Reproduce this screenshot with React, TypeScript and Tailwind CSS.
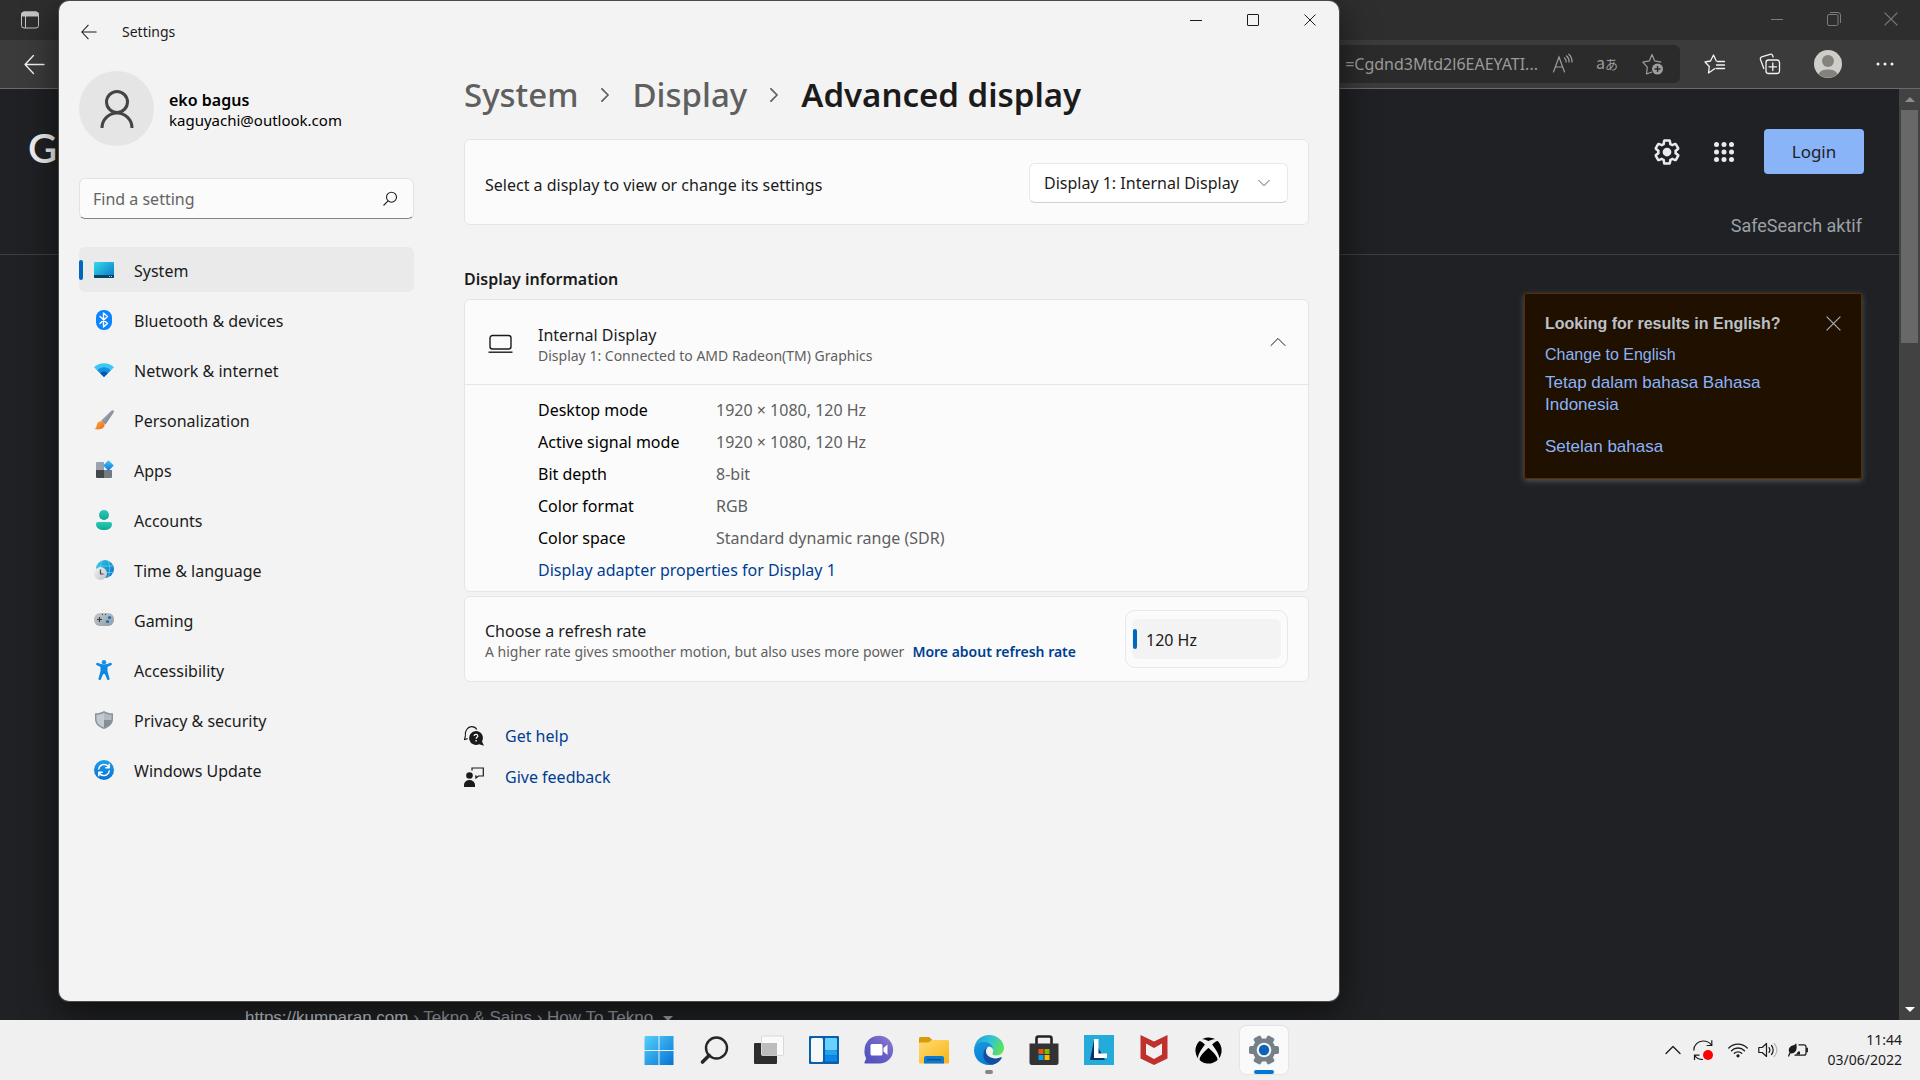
import React from "react";
import { FaXbox } from "react-icons/fa";

type IconProps = { className?: string };

/* ---------- Settings navigation icons ---------- */

const SystemIcon = () => (
  <svg viewBox="0 0 20 20" className="size-5">
    <defs>
      <linearGradient id="sys" x1="0" y1="0" x2="1" y2="1">
        <stop offset="0" stopColor="#34dbe8" />
        <stop offset="1" stopColor="#0a74c8" />
      </linearGradient>
    </defs>
    <rect x="0" y="2" width="20" height="16" rx="1" fill="url(#sys)" />
    <path d="M0 15h20v2a1 1 0 0 1-1 1H1a1 1 0 0 1-1-1z" fill="#0b4263" />
    <path d="M15 16h1v1h-1zM17 16h1v1h-1z" fill="#9fd4f2" />
  </svg>
);

const BluetoothIcon = () => (
  <svg viewBox="0 0 20 20" className="size-5">
    <rect x="2" y="0" width="16" height="20" rx="7.5" fill="#0a84ff" />
    <path d="M6 6.500l7.500 7-4 3.500V3l4 3.500-7.500 7" fill="none" stroke="#fff" strokeWidth="1.400" strokeLinejoin="round" strokeLinecap="round" />
  </svg>
);

const NetworkIcon = () => (
  <svg viewBox="0 0 20 20" className="size-5">
    <path d="M10 17L0 7.2C5.500 1.900 14.500 1.900 20 7.200z" fill="#3cc8f4" />
    <path d="M10 17L3.200 10.300C7 6.200 13 6.200 16.800 10.300z" fill="#1590df" />
    <path d="M10 17L6.200 13.200C8.300 10.900 11.700 10.900 13.800 13.200z" fill="#0d57a8" />
  </svg>
);

const BrushIcon = () => (
  <svg viewBox="0 0 20 20" className="size-5">
    <defs>
      <linearGradient id="br" x1="0" y1="0" x2="1" y2="1">
        <stop offset="0" stopColor="#b4bec8" />
        <stop offset="1" stopColor="#66727e" />
      </linearGradient>
      <linearGradient id="bt" x1="0" y1="0" x2="1" y2="1">
        <stop offset="0" stopColor="#fbb13c" />
        <stop offset="1" stopColor="#f4651d" />
      </linearGradient>
    </defs>
    <path d="M19.500.5c.7.7.6 1.500 0 2.300L11.500 14.500 7 10.800 17 .9c.8-.8 1.900-1 2.500-.4z" fill="url(#br)" />
    <path d="M6.500 11.200c2.200-.3 4.300 1.500 4.100 3.800C10.400 18.500 6 20.300.3 19c2.200-.8 2.100-2.200 2.500-4.200.4-2 1.800-3.400 3.700-3.600z" fill="url(#bt)" />
  </svg>
);

const AppsIcon = () => (
  <svg viewBox="0 0 20 20" className="size-5">
    <defs>
      <linearGradient id="apd" x1="0" y1="0" x2="1" y2="1">
        <stop offset="0" stopColor="#46c9f7" />
        <stop offset="1" stopColor="#0c72d4" />
      </linearGradient>
    </defs>
    <path d="M2 3a1 1 0 0 1 1-1h7v8H2z" fill="#99a2ae" />
    <path d="M2 10h8v8H3a1 1 0 0 1-1-1z" fill="#43474c" />
    <path d="M10 10h8v7a1 1 0 0 1-1 1h-7z" fill="#727a83" />
    <rect x="10.700" y="1.700" width="7.600" height="7.600" rx=".8" transform="rotate(45 14.500 5.500)" fill="url(#apd)" />
  </svg>
);

const AccountsIcon = () => (
  <svg viewBox="0 0 20 20" className="size-5">
    <defs>
      <linearGradient id="acc" x1="0" y1="0" x2="0" y2="1">
        <stop offset="0" stopColor="#27cdb6" />
        <stop offset="1" stopColor="#14a594" />
      </linearGradient>
    </defs>
    <circle cx="10" cy="5" r="5" fill="url(#acc)" />
    <path d="M4 12h12a2 2 0 0 1 2 2c0 4-3.500 6-8 6s-8-2-8-6a2 2 0 0 1 2-2z" fill="url(#acc)" />
  </svg>
);

const TimeIcon = () => (
  <svg viewBox="0 0 20 20" className="size-5">
    <defs>
      <linearGradient id="gl" x1="0" y1="0" x2="1" y2="1">
        <stop offset="0" stopColor="#2fcbe0" />
        <stop offset="1" stopColor="#0f68c4" />
      </linearGradient>
      <linearGradient id="ck" x1="0" y1="0" x2="1" y2="1">
        <stop offset="0" stopColor="#f4f4f5" />
        <stop offset="1" stopColor="#bcc0c4" />
      </linearGradient>
    </defs>
    <circle cx="11" cy="9" r="9" fill="url(#gl)" />
    <path d="M2.500 6h17M6 12.500h13.500M8 .8c-2 4-2 12 0 16.400M14 .8c2.300 4 2.300 12 0 16.400" stroke="#5fe0ee" strokeWidth=".7" fill="none" />
    <circle cx="6.500" cy="13.500" r="6.500" fill="url(#ck)" />
    <path d="M6.500 9.500V14H9.500" stroke="#44484d" strokeWidth="1.200" fill="none" />
  </svg>
);

const GamingIcon = () => (
  <svg viewBox="0 0 20 20" className="size-5">
    <defs>
      <linearGradient id="gm" x1="0" y1="0" x2="1" y2="1">
        <stop offset="0" stopColor="#c3c9ce" />
        <stop offset="1" stopColor="#929ba3" />
      </linearGradient>
    </defs>
    <rect x="0" y="3" width="20" height="13" rx="6" fill="url(#gm)" />
    <path d="M5.500 7v5M3 9.500h5" stroke="#3a3e43" strokeWidth="1.200" />
    <path d="M8 4.500h1M11 4.500h1" stroke="#3a3e43" strokeWidth="1" />
    <circle cx="15.500" cy="7.500" r="1.600" fill="#0f6fc6" />
    <circle cx="13.500" cy="11.500" r="1.600" fill="#0f6fc6" />
  </svg>
);

const AccessibilityIcon = () => (
  <svg viewBox="0 0 20 20" className="size-5">
    <circle cx="10" cy="2.200" r="2.200" fill="#1793e4" />
    <path d="M2.300 3.500c.4-.8 1-.9 1.800-.5 3.700 1.900 8.100 1.900 11.800 0 .8-.4 1.400-.3 1.800.5.400.8 0 1.500-.7 1.800L13.500 7v4l2 7.500c.2.800-.2 1.400-.9 1.500-.7.200-1.300-.1-1.500-.8L10.800 14H9.200l-2.300 5.200c-.2.700-.8 1-1.500.8-.7-.1-1.100-.7-.9-1.500l2-7.500V7L3 5.300c-.7-.3-1.100-1-.7-1.800z" fill="#1189e0" />
  </svg>
);

const ShieldIcon = () => (
  <svg viewBox="0 0 20 20" className="size-5">
    <path d="M10 1c2.500 1.700 5.500 2.300 9 2.300V9c0 5-3.500 8-9 10C4.500 17 1 14 1 9V3.300C4.500 3.300 7.500 2.700 10 1z" fill="#8b949c" />
    <path d="M10 2.700v14.700C5.300 15.600 2.500 13 2.500 9V4.700c3 0 5.400-.6 7.500-2z" fill="#c5cad0" />
    <path d="M10 2.700c2.100 1.400 4.500 2 7.500 2V10H10z" fill="#b4bac1" />
    <path d="M10 10h7.400c-.4 3.500-3 5.800-7.400 7.400z" fill="#858e96" />
  </svg>
);

const UpdateIcon = () => (
  <svg viewBox="0 0 20 20" className="size-5">
    <defs>
      <linearGradient id="up" x1="0" y1="0" x2="0" y2="1">
        <stop offset="0" stopColor="#1f9de9" />
        <stop offset="1" stopColor="#0873d4" />
      </linearGradient>
    </defs>
    <circle cx="10" cy="10" r="10" fill="url(#up)" />
    <path d="M4.800 9a5.400 5.400 0 0 1 9.900-2M15.200 11a5.400 5.400 0 0 1-9.900 2M15.200 4.300v3.400h-3.400M4.800 15.700v-3.400h3.400" stroke="#fff" strokeWidth="1.500" fill="none" strokeLinecap="round" strokeLinejoin="round" />
  </svg>
);

/* ---------- Line glyphs ---------- */

const BackArrow = ({ className }: IconProps) => (
  <svg viewBox="0 0 20 20" className={className} fill="none" stroke="currentColor" strokeWidth="1.300" strokeLinecap="round" strokeLinejoin="round">
    <path d="M19 10H1M9 1.500L1 10l8 8.500" />
  </svg>
);

const Chevron = ({ className }: IconProps) => (
  <svg viewBox="0 0 16 16" className={className} fill="none" stroke="currentColor" strokeLinecap="round" strokeLinejoin="round">
    <path d="M1 4.500l7 7 7-7" />
  </svg>
);

const Minimize = () => (
  <svg viewBox="0 0 12 12" className="size-3" stroke="currentColor" fill="none">
    <path d="M0 6.500h12" />
  </svg>
);

const Close = ({ className }: IconProps) => (
  <svg viewBox="0 0 12 12" className={className} stroke="currentColor" fill="none">
    <path d="M.5.5l11 11M11.500.5l-11 11" />
  </svg>
);

/* ---------- Taskbar icons ---------- */

const StartIcon = () => (
  <svg viewBox="0 0 30 30" className="size-[30px]">
    <defs>
      <linearGradient id="st" gradientUnits="userSpaceOnUse" x1="0" y1="0" x2="30" y2="30">
        <stop offset="0" stopColor="#55d4fd" />
        <stop offset="1" stopColor="#0572d3" />
      </linearGradient>
    </defs>
    <path d="M1.500 1H14.500v14H.5V2zM15.500 1h14v14h-14zM.5 16h14v14H.5zM15.500 16h14v14h-14z" fill="url(#st)" />
  </svg>
);

const SearchTaskIcon = () => (
  <svg viewBox="0 0 30 30" className="size-[30px]" fill="none" stroke="#262626" strokeLinecap="round">
    <circle cx="17.500" cy="13" r="10.500" strokeWidth="2.400" />
    <path d="M10 20.500L3.500 27" strokeWidth="3.600" />
  </svg>
);

const TaskViewIcon = () => (
  <svg viewBox="0 0 30 30" className="size-[30px]">
    <rect x="0" y="8" width="23" height="21" rx="1" fill="#2d2d2b" />
    <rect x="7.500" y="1" width="22" height="19.500" rx="1" fill="#fafafa" stroke="#d8d8d8" />
    <path d="M8 8h15v12.500H8z" fill="#bdbdbd" />
  </svg>
);

const WidgetsIcon = () => (
  <svg viewBox="0 0 30 30" className="size-[30px]">
    <rect x="0" y="1" width="30" height="28" rx="1" fill="#0b5ea8" />
    <rect x="2" y="3" width="12" height="24" rx="1.500" fill="#f5f7f9" />
    <rect x="16" y="3" width="12" height="12.500" rx="1" fill="#66d2fd" />
    <rect x="16" y="16" width="12" height="4.500" rx=".5" fill="#1ea4f5" />
    <rect x="16" y="21" width="12" height="5.500" rx=".5" fill="#0d86ea" />
  </svg>
);

const ChatIcon = () => (
  <svg viewBox="0 0 30 30" className="size-[30px]">
    <defs>
      <linearGradient id="ch" x1="0" y1="1" x2="1" y2="0">
        <stop offset="0" stopColor="#4a4fbd" />
        <stop offset=".6" stopColor="#6c63c8" />
        <stop offset="1" stopColor="#9b7fc9" />
      </linearGradient>
    </defs>
    <path d="M15 .8c8 0 14.200 6.200 14.200 14S23 28.500 15 28.500H1.200c-.8 0-1.100-.9-.6-1.500l1.600-3.400A13.500 13.500 0 0 1 .6 14.800C.6 7 7 .8 15 .8z" fill="url(#ch)" />
    <rect x="6.500" y="9" width="12" height="11.500" rx="1.500" fill="#fff" />
    <path d="M19.500 13l4-3.500v10.500l-4-3.500z" fill="#fff" />
  </svg>
);

const FolderIcon = () => (
  <svg viewBox="0 0 30 30" className="size-[30px]">
    <defs>
      <linearGradient id="fo" x1="0" y1="0" x2="1" y2="1">
        <stop offset="0" stopColor="#ffdc74" />
        <stop offset="1" stopColor="#f8b414" />
      </linearGradient>
    </defs>
    <path d="M0 3.500A1.500 1.500 0 0 1 1.500 2H10l3.500 3-3 4H0z" fill="#dc9a09" />
    <path d="M0 8.500A1.500 1.500 0 0 1 1 7.500h8.500L13 5h15.500A1.500 1.500 0 0 1 30 6.500v21a1 1 0 0 1-1 1H1a1 1 0 0 1-1-1z" fill="url(#fo)" />
    <path d="M5 28.500V23a2 2 0 0 1 2-2h16a2 2 0 0 1 2 2v5.500z" fill="#0d78cf" />
    <path d="M8 24.700h14" stroke="#0a4c8c" strokeWidth="1.200" />
  </svg>
);

const EdgeIcon = () => (
  <svg viewBox="0 0 30 30" className="size-[30px]">
    <defs>
      <linearGradient id="e1" x1="0" y1=".3" x2="1" y2=".6">
        <stop offset="0" stopColor="#259fdb" />
        <stop offset=".5" stopColor="#30c5d3" />
        <stop offset="1" stopColor="#63e453" />
      </linearGradient>
      <linearGradient id="e2" x1="0" y1="0" x2=".6" y2="1">
        <stop offset="0" stopColor="#179bde" />
        <stop offset="1" stopColor="#0878d4" />
      </linearGradient>
    </defs>
    <path d="M.2 13C1.500 5 7.500 0 15 0c8.500 0 15 6 15 13 0 4.500-3.500 7.500-8 7.500-3 0-4-1.300-3.300-2.500 1.500-2.600 0-6-3.700-7z" fill="url(#e1)" />
    <path d="M0 15C.5 10 4.500 7 9.500 7c5.500 0 9.500 3.500 9.500 7.500-.5-2-2-3-3.500-3-4 0-5.500 7-2 11.500S24 28 20 29c-1.500.7-3.500 1-5 1C6.500 30 0 23.500 0 15z" fill="url(#e2)" />
    <path d="M14 11.800c-6 2.700-7.500 16 4.500 18 4.500-1 7.500-3.500 9.300-6.800.3-.6-.2-1-.8-.7-7 3.200-15.500-.8-15-6.300.1-1.800.8-3.200 2-4.200z" fill="#104f9f" />
  </svg>
);

const StoreIcon = () => (
  <svg viewBox="0 0 30 30" className="size-[30px]">
    <path d="M7.500 9V3.500a2 2 0 0 1 2-2h11a2 2 0 0 1 2 2V9" fill="none" stroke="#222" strokeWidth="2.600" />
    <path d="M.5 8.500h29v19a2.500 2.500 0 0 1-2.500 2.500H3a2.500 2.500 0 0 1-2.500-2.500z" fill="#333" />
    <path d="M9.500 14h5v5h-5z" fill="#f1511b" />
    <path d="M15.500 14h5v5h-5z" fill="#80b900" />
    <path d="M9.500 20h5v5h-5z" fill="#00a3ee" />
    <path d="M15.500 20h5v5h-5z" fill="#fbb901" />
  </svg>
);

const LenovoIcon = () => (
  <svg viewBox="0 0 30 30" className="size-[30px]">
    <path d="M0 0h30v30H0z" fill="#25abda" />
    <path d="M10 5L6 25h15z" fill="#0b3167" />
    <path d="M10 4h4.500v14.500H23V23H10z" fill="#fff" />
  </svg>
);

const ShieldMIcon = () => (
  <svg viewBox="0 0 30 30" className="size-[30px]">
    <path d="M1.500 0L15 6.500 28.500 0v23.500L15 30 1.500 23.500z" fill="#c0302d" />
    <path d="M7 8.500l8 4.500 8-4.500v11L15 24l-8-4.500z" fill="#f1f1f1" />
  </svg>
);

const GearIcon = () => (
  <svg viewBox="-15 -15 30 30" className="size-[30px]">
    <g fill="#75808a">
      <circle r="11.500" />
      {[0, 60, 120].map((a) => (
        <rect key={a} x="-15" y="-4" width="30" height="8" rx="1.800" transform={`rotate(${a})`} />
      ))}
    </g>
    <circle r="7.300" fill="#f4f5f6" />
    <circle r="5.200" fill="#0f63b5" />
  </svg>
);

/* ---------- Data ---------- */

const nav = [
  { label: "System", icon: <SystemIcon /> },
  { label: "Bluetooth & devices", icon: <BluetoothIcon /> },
  { label: "Network & internet", icon: <NetworkIcon /> },
  { label: "Personalization", icon: <BrushIcon /> },
  { label: "Apps", icon: <AppsIcon /> },
  { label: "Accounts", icon: <AccountsIcon /> },
  { label: "Time & language", icon: <TimeIcon /> },
  { label: "Gaming", icon: <GamingIcon /> },
  { label: "Accessibility", icon: <AccessibilityIcon /> },
  { label: "Privacy & security", icon: <ShieldIcon /> },
  { label: "Windows Update", icon: <UpdateIcon /> },
];

const info = [
  ["Desktop mode", "1920 × 1080, 120 Hz"],
  ["Active signal mode", "1920 × 1080, 120 Hz"],
  ["Bit depth", "8-bit"],
  ["Color format", "RGB"],
  ["Color space", "Standard dynamic range (SDR)"],
];

const apps = [
  { label: "Start", icon: <StartIcon /> },
  { label: "Search", icon: <SearchTaskIcon /> },
  { label: "Task view", icon: <TaskViewIcon /> },
  { label: "Widgets", icon: <WidgetsIcon /> },
  { label: "Chat", icon: <ChatIcon /> },
  { label: "File Explorer", icon: <FolderIcon /> },
  { label: "Microsoft Edge", icon: <EdgeIcon />, open: true },
  { label: "Microsoft Store", icon: <StoreIcon /> },
  { label: "Lenovo Vantage", icon: <LenovoIcon /> },
  { label: "McAfee", icon: <ShieldMIcon /> },
  { label: "Xbox", icon: <FaXbox className="size-[27px] text-black" /> },
  { label: "Settings app", icon: <GearIcon />, active: true },
];

/* ---------- Browser ---------- */

function Browser() {
  return (
    <div className="flex min-h-0 flex-1 flex-col bg-[#202124]">
      <div className="flex h-10 shrink-0 items-center justify-between bg-[#2e2e2e] text-[#7c7c7c]">
        <button aria-label="Tab actions" className="ml-5 text-[#c4c4c4]">
          <svg viewBox="0 0 20 20" className="size-5" fill="none" stroke="currentColor">
            <rect x="1.500" y="2" width="17" height="16" rx="2.500" />
            <path d="M1.500 4.500a2.500 2.500 0 0 1 2.500-2.500h12a2.500 2.500 0 0 1 2.500 2.500V6h-17z" fill="currentColor" />
            <path d="M5.500 6v12" />
          </svg>
        </button>
        <div className="flex h-[38px] self-start">
          <button aria-label="Minimize browser" className="flex w-[57px] items-center justify-center"><Minimize /></button>
          <button aria-label="Restore browser" className="flex w-[57px] items-center justify-center">
            <svg viewBox="0 0 14 14" className="size-3.5" fill="none" stroke="currentColor">
              <rect x=".5" y="2.500" width="10.500" height="11" rx="1.500" />
              <path d="M3 .5h8a2.500 2.500 0 0 1 2.500 2.500v8" />
            </svg>
          </button>
          <button aria-label="Close browser" className="flex w-[58px] items-center justify-center"><Close className="size-3.5" /></button>
        </div>
      </div>

      <div className="flex h-[49px] shrink-0 items-center border-b border-[#6a6a6a] bg-[#3b3b3b] text-[#f2f2f2]">
        <button aria-label="Back" className="ml-6"><BackArrow className="size-[21px]" /></button>
        <div className="ml-6 flex h-[38px] flex-1 items-center rounded-md bg-[#2b2b2b] pr-4 text-[#9d9d9d]">
          <input
            aria-label="Address"
            readOnly
            value="=Cgdnd3Mtd2l6EAEYATI..."
            className="min-w-0 flex-1 bg-transparent text-right text-base text-[#9a9a9a] outline-none"
          />
          <button aria-label="Read aloud" className="ml-3.5">
            <svg viewBox="0 0 22 22" className="size-[22px]" fill="none" stroke="currentColor" strokeWidth="1.200" strokeLinecap="round">
              <path d="M1.500 19L7 4l5.500 15M3.600 14h6.800M12.500 5c1.200 1 1.700 2.300 1.700 4M14.500 3c1.800 1.500 2.700 3.500 2.600 6M16.800 1.200c2.200 2 3.300 4.800 3.200 7.800" />
            </svg>
          </button>
          <button aria-label="Translate" className="ml-[22px] flex items-baseline pb-1 font-['Noto_Sans_CJK_JP',sans-serif] leading-5">
            <span className="text-base">a</span><span className="text-[13px]">あ</span>
          </button>
          <button aria-label="Add to favorites" className="ml-6">
            <svg viewBox="0 0 22 22" className="size-[22px]" fill="none" stroke="currentColor" strokeWidth="1.200" strokeLinejoin="round">
              <path d="M10 19l-5.500 2 .8-6.800L.8 9.200l6.500-1.300L10 1.500l2.700 6.400 6.500 1.300" />
              <circle cx="15.500" cy="16" r="5.500" fill="currentColor" stroke="none" />
              <path d="M15.500 13v6M12.500 16h6" stroke="#2b2b2b" strokeWidth="1.400" />
            </svg>
          </button>
        </div>
        <button aria-label="Favorites" className="ml-6">
          <svg viewBox="0 0 22 22" className="size-[22px]" fill="none" stroke="currentColor" strokeWidth="1.300" strokeLinejoin="round" strokeLinecap="round">
            <path d="M11 15.500L4.500 20l.8-6.500L1 9l5.500-1L9.500 2l2.800 6M13.500 8.500h7M12.500 12h8M12.500 15.500h8" />
          </svg>
        </button>
        <button aria-label="Collections" className="ml-[33px]">
          <svg viewBox="0 0 22 22" className="size-[22px]" fill="none" stroke="currentColor" strokeWidth="1.300" strokeLinejoin="round" strokeLinecap="round">
            <rect x="7" y="7" width="13.500" height="13.500" rx="2.500" />
            <path d="M13.800 10v7.500M10 13.800h7.500M4.800 15.500L1.500 6.500c-.4-1.200.1-2.200 1.200-2.600L11 1.300c1.200-.4 2.200.1 2.600 1.200l.5 1.500" />
          </svg>
        </button>
        <button aria-label="Profile" className="ml-[33px]">
          <svg viewBox="0 0 28 28" className="size-7">
            <circle cx="14" cy="14" r="14" fill="#cfcdca" />
            <circle cx="14" cy="11" r="6" fill="#85817d" />
            <path d="M4.500 24a10 6.500 0 0 1 19 0 14 14 0 0 1-19 0z" fill="#85817d" />
          </svg>
        </button>
        <button aria-label="More" className="mr-[25px] ml-[33px]">
          <svg viewBox="0 0 20 20" className="size-5" fill="currentColor">
            <circle cx="3" cy="10" r="1.500" /><circle cx="10" cy="10" r="1.500" /><circle cx="17" cy="10" r="1.500" />
          </svg>
        </button>
      </div>

      <div className="flex min-h-0 flex-1">
        <div className="flex min-w-0 flex-1 flex-col">
          <header className="flex h-[166px] shrink-0 flex-col border-b border-[#3c4043] pr-[35px] pl-7">
            <div className="flex h-[125px] items-center justify-between">
              <span className="pb-2 font-['Lato',sans-serif] text-[40px] leading-none font-semibold text-[#f1f1f1]">Google</span>
              <div className="flex items-center">
                <button aria-label="Quick settings" className="text-[#e8eaed]">
                  <svg viewBox="0 0 24 24" className="size-[30px]" fill="currentColor">
                    <path d="M13.850 22.250h-3.700c-.74 0-1.360-.54-1.450-1.270l-.27-1.890c-.27-.14-.53-.29-.79-.46l-1.800.72c-.7.26-1.470-.03-1.810-.65L2.200 15.530c-.35-.66-.2-1.440.36-1.880l1.530-1.190c-.01-.15-.02-.3-.02-.46 0-.15.01-.31.02-.46l-1.520-1.190c-.59-.45-.74-1.260-.37-1.880l1.850-3.190c.34-.62 1.110-.9 1.790-.63l1.810.73c.26-.17.52-.32.78-.46l.27-1.910c.09-.7.71-1.250 1.440-1.250h3.700c.74 0 1.360.54 1.450 1.270l.27 1.890c.27.14.53.29.79.46l1.800-.72c.71-.26 1.480.03 1.820.65l1.840 3.180c.36.66.2 1.440-.36 1.880l-1.520 1.190c.01.15.02.3.02.46s-.01.31-.02.46l1.520 1.190c.56.45.72 1.230.37 1.860l-1.860 3.220c-.34.62-1.110.9-1.800.63l-1.800-.72c-.26.17-.52.32-.78.46l-.27 1.910c-.1.68-.72 1.220-1.460 1.220zm-3.230-2h2.760l.37-2.550.53-.22c.44-.18.88-.44 1.340-.78l.45-.34 2.380.96 1.380-2.400-2.030-1.580.07-.56c.03-.26.06-.51.06-.78s-.03-.53-.06-.78l-.07-.56 2.030-1.580-1.390-2.400-2.390.96-.45-.35c-.42-.32-.87-.58-1.330-.77l-.52-.22-.37-2.550h-2.760l-.37 2.550-.53.21c-.44.19-.88.44-1.340.79l-.45.33-2.380-.95-1.390 2.390 2.030 1.580-.07.56a7 7 0 0 0-.06.79c0 .26.02.53.06.78l.07.56-2.030 1.580 1.380 2.400 2.390-.96.45.35c.43.33.86.58 1.330.77l.53.22.38 2.550z" />
                    <circle cx="12" cy="12" r="3.500" />
                  </svg>
                </button>
                <button aria-label="Google apps" className="ml-8 text-[#e8eaed]">
                  <svg viewBox="0 0 20 20" className="size-5" fill="currentColor">
                    {[2.500, 10, 17.500].flatMap((y) => [2.500, 10, 17.500].map((x) => <circle key={`${x}-${y}`} cx={x} cy={y} r="2.500" />))}
                  </svg>
                </button>
                <a href="#login" className="ml-[30px] flex h-[45px] w-[100px] items-center justify-center rounded bg-[#8ab4f8] text-[17px] text-[#202124]">Login</a>
              </div>
            </div>
            <a href="#safesearch" className="mr-0.5 self-end font-['Roboto',sans-serif] text-lg leading-6 text-[#9aa0a6]">SafeSearch aktif</a>
          </header>

          <aside className="mt-[38px] mr-[37px] w-[338px] self-end rounded-xs border border-[#5a2d00] bg-[#201000] px-5 pt-[18px] pb-5 font-['Liberation_Sans',sans-serif] text-[#8ab4f8] shadow-[0_2px_6px_rgba(140,140,140,0.5)]">
            <div className="flex items-start justify-between">
              <h2 className="text-base leading-6 font-bold text-[#bdc1c6]">Looking for results in English?</h2>
              <button aria-label="Dismiss" className="pt-1 text-[#a5aaae]"><Close className="size-[15px]" /></button>
            </div>
            <a href="#english" className="mt-2 block text-base leading-[22px]">Change to English</a>
            <a href="#indonesia" className="mt-1.5 block pr-10 text-[17px] leading-[22px]">Tetap dalam bahasa Bahasa Indonesia</a>
            <a href="#language" className="mt-5 block text-[17px] leading-[22px]">Setelan bahasa</a>
          </aside>

          <div className="mt-auto flex h-3 shrink-0 items-start gap-2.5 overflow-hidden pl-[245px] font-['Liberation_Sans',sans-serif] text-[17px] leading-5 whitespace-nowrap text-[#969ba1]">
            <a href="#kumparan"><span className="text-[#bdc1c6]">https://kumparan.com</span> › Tekno &amp; Sains › How To Tekno</a>
            <span className="mt-2 border-x-[5px] border-t-[5px] border-x-transparent border-t-[#969ba1]" />
          </div>
        </div>

        <div className="flex w-[21px] shrink-0 flex-col items-center bg-[#424242]">
          <span className="mt-2 mb-2 border-x-[5px] border-b-[5px] border-x-transparent border-b-[#8d8d8d]" />
          <span className="h-1/4 w-[17px] bg-[#686868]" />
          <span className="mt-auto mb-2 border-x-[5px] border-t-[5px] border-x-transparent border-t-white" />
        </div>
      </div>
    </div>
  );
}

/* ---------- Settings window ---------- */

function Sidebar() {
  return (
    <aside className="w-[335px] shrink-0">
      <div className="mt-2 flex items-center gap-[15px]">
        <div className="flex size-[75px] items-center justify-center rounded-full bg-[#e5e5e5]">
          <svg viewBox="0 0 36 40" className="h-10 w-9" fill="none" stroke="#444" strokeWidth="3">
            <circle cx="18" cy="13" r="10.500" />
            <path d="M3 39a15 15 0 0 1 30 0" />
          </svg>
        </div>
        <div className="pt-0.5 text-black">
          <div className="text-base leading-5 font-semibold">eko bagus</div>
          <div className="text-[15px] leading-5">kaguyachi@outlook.com</div>
        </div>
      </div>

      <div className="mt-8 flex h-[41px] items-center rounded-md border border-[#e2e2e2] border-b-[#868686] bg-[#fbfbfb] px-[13px]">
        <input aria-label="Find a setting" placeholder="Find a setting" className="min-w-0 flex-1 bg-transparent text-base text-[#1b1b1b] outline-none placeholder:text-[#646464]" />
        <svg viewBox="0 0 16 16" className="mr-0.5 size-4" fill="none" stroke="#222" strokeWidth="1.100">
          <circle cx="9.500" cy="6.200" r="5" />
          <path d="M6 9.800L1.500 14.500" />
        </svg>
      </div>

      <nav className="mt-7 flex flex-col gap-[5px]">
        {nav.map((n, i) => (
          <a key={n.label} href="#nav" className={i === 0 ? "relative flex h-[45px] items-center gap-5 rounded-md bg-[#eaeaea] pl-[15px]" : "flex h-[45px] items-center gap-5 rounded-md pl-[15px]"}>
            {i === 0 && <span className="absolute left-0 h-5 w-1 rounded-full bg-[#0067c0]" />}
            {n.icon}
            <span className="pt-0.5 text-base">{n.label}</span>
          </a>
        ))}
      </nav>
    </aside>
  );
}

function SettingsWindow() {
  return (
    <main className="absolute top-px bottom-[79px] left-[59px] flex w-2/3 flex-col overflow-hidden rounded-[10px] bg-[#f3f3f3] text-[#1b1b1b] ring-1 ring-[#4a4a4a]">
      <div className="flex h-[62px] shrink-0 items-start justify-between">
        <div className="flex h-[62px] items-center pl-[22px]">
          <button aria-label="Back to previous page"><BackArrow className="size-4" /></button>
          <span className="ml-[25px] text-sm">Settings</span>
        </div>
        <div className="flex h-[38px]">
          <button aria-label="Minimize" className="flex w-[57px] items-center justify-center"><Minimize /></button>
          <button aria-label="Maximize" className="flex w-[57px] items-center justify-center">
            <svg viewBox="0 0 12 12" className="size-3" fill="none" stroke="currentColor"><rect x=".5" y=".5" width="11" height="11" rx=".5" /></svg>
          </button>
          <button aria-label="Close" className="flex w-[57px] items-center justify-center"><Close className="size-3" /></button>
        </div>
      </div>

      <div className="flex min-h-0 flex-1 gap-[50px] pr-[30px] pl-5">
        <Sidebar />
        <section className="min-w-0 flex-1">
          <h1 className="mt-2 flex items-center text-[33px] leading-[48px] font-semibold">
            <a href="#system" className="font-medium text-[#5f5f5f]">System</a>
            <Chevron className="mx-5 size-3.5 -rotate-90 stroke-2 text-[#5f5f5f]" />
            <a href="#display" className="font-medium text-[#5f5f5f]">Display</a>
            <Chevron className="mx-5 size-3.5 -rotate-90 stroke-2 text-[#5f5f5f]" />
            <span>Advanced display</span>
          </h1>

          <div className="mt-5 flex h-[86px] items-center justify-between rounded-md border border-[#e5e5e5] bg-[#fbfbfb] px-5">
            <label htmlFor="display-select" className="mt-1.5 text-base">Select a display to view or change its settings</label>
            <div className="relative mt-0.5">
              <select id="display-select" className="h-10 w-[259px] appearance-none rounded-md border border-[#e8e8e8] border-b-[#cfcfcf] bg-white pl-3.5 text-base outline-none">
                <option>Display 1: Internal Display</option>
              </select>
              <Chevron className="pointer-events-none absolute top-3.5 right-[18px] size-3 stroke-[1.300] text-[#5d5d5d]" />
            </div>
          </div>

          <h2 className="mt-[42px] text-base leading-6 font-semibold">Display information</h2>

          <div className="mt-2 rounded-md border border-[#e5e5e5] bg-[#fbfbfb]">
            <button className="flex h-[85px] w-full items-center border-b border-[#e5e5e5] pr-[22px] pl-[23px] text-left">
              <svg viewBox="0 0 26 20" className="mt-1 h-5 w-[26px]" fill="none" stroke="#1b1b1b" strokeWidth="1.400">
                <rect x="2" y="1.500" width="21" height="13.500" rx="2.500" />
                <path d="M.5 18.200h24" />
              </svg>
              <span className="ml-6 flex-1 pt-1.5">
                <span className="block text-base leading-[21px]">Internal Display</span>
                <span className="block text-sm leading-5 text-[#5f5f5f]">Display 1: Connected to AMD Radeon(TM) Graphics</span>
              </span>
              <Chevron className="size-4 rotate-180" />
            </button>
            <div className="pt-[9px] pb-[5px] pl-[73px] text-base leading-8">
              <table className="text-left">
                <tbody>
                  {info.map(([k, v]) => (
                    <tr key={k}>
                      <th scope="row" className="w-[178px] p-0 font-normal text-black">{k}</th>
                      <td className="p-0 text-[#5f5f5f]">{v}</td>
                    </tr>
                  ))}
                </tbody>
              </table>
              <a href="#adapter" className="text-[#003e92]">Display adapter properties for Display 1</a>
            </div>
          </div>

          <div className="mt-1 flex h-[86px] items-center justify-between rounded-md border border-[#e5e5e5] bg-[#fbfbfb] px-5">
            <div className="pt-1">
              <div className="text-base leading-[21px]">Choose a refresh rate</div>
              <div className="text-sm leading-5 text-[#5f5f5f]">
                A higher rate gives smoother motion, but also uses more power
                <a href="#more" className="ml-2 font-semibold text-[#003e92]">More about refresh rate</a>
              </div>
            </div>
            <div className="w-[163px] rounded-[10px] border border-[#e8e8e8] px-1.5 py-2">
              <label className="flex h-10 items-center rounded-md bg-[#f3f3f3] pl-px text-base">
                <input type="radio" name="rate" defaultChecked className="h-5 w-1 appearance-none rounded-full bg-[#0067c0]" />
                <span className="ml-[9px] pt-0.5">120 Hz</span>
              </label>
            </div>
          </div>

          <div className="mt-[34px] flex flex-col gap-px text-base text-[#003e92]">
            <a href="#help" className="flex h-10 items-center gap-[21px]">
              <svg viewBox="0 0 20 20" className="size-5 text-[#1b1b1b]" fill="none">
                <path d="M1.500 9.500C.8 5 3.500.8 7.500.6c2.500-.1 4.300 1 5.300 2.800M1.500 9.500L.4 13.500l3.200-.9" stroke="currentColor" strokeWidth="1.100" />
                <path d="M12 5a7 7 0 0 1 6 10.500l2 4.300-4.800-1.500A7 7 0 1 1 12 5z" fill="currentColor" />
                <path d="M10 9.800c.3-2 3.800-2 3.800.1 0 1.300-1.700 1.400-1.700 2.800M12.100 14v1.400" stroke="#fff" strokeWidth="1.300" />
              </svg>
              Get help
            </a>
            <a href="#feedback" className="flex h-10 items-center gap-[21px]">
              <svg viewBox="0 0 20 20" className="size-5 text-[#1b1b1b]" fill="currentColor">
                <circle cx="5.500" cy="8.500" r="3.300" />
                <path d="M0 20v-2a5.500 5 0 0 1 11 0v2z" />
                <path d="M8 3.500V1h11.300v8h-4.800l-2.500 2v-2h-1" fill="none" stroke="currentColor" strokeWidth="1.200" />
              </svg>
              Give feedback
            </a>
          </div>
        </section>
      </div>
    </main>
  );
}

/* ---------- Taskbar ---------- */

function Taskbar() {
  return (
    <footer className="relative grid h-[60px] shrink-0 grid-cols-[1fr_auto_1fr] items-center bg-[#f0f0f0] text-[#1b1b1b]">
      <div />
      <div className="flex gap-[7px] pl-0.5">
        {apps.map((a) => (
          <button
            key={a.label}
            aria-label={a.label}
            className={a.active ? "relative flex size-12 items-center justify-center rounded-md bg-[#fafafa] ring-1 ring-[#e4e4e4]" : "relative flex size-12 items-center justify-center"}
          >
            {a.icon}
            {a.open && <span className="absolute bottom-0 h-1 w-2 rounded-full bg-[#868686]" />}
            {a.active && <span className="absolute bottom-0 h-1 w-5 rounded-full bg-[#0078d4]" />}
          </button>
        ))}
      </div>
      <div className="flex items-center justify-end pr-[18px]">
        <button aria-label="Show hidden icons" className="mr-3"><Chevron className="size-4 rotate-180 stroke-[1.300]" /></button>
        <button aria-label="Update available" className="mr-[15px]">
          <svg viewBox="0 0 20 20" className="size-5" fill="none" stroke="#1b1b1b" strokeWidth="1.200">
            <path d="M.8 10.500C.8 5 5 1 10 1c3.700 0 6.900 1.600 8.500 4.300M18.800.3v5.200h-5.200M1.500 20v-4.800h5M1.500 15.200c1.600 2.700 4.600 4.300 8.500 4.300" />
            <circle cx="15" cy="15" r="5" fill="#f00" stroke="none" />
          </svg>
        </button>
        <button aria-label="Network, volume and battery" className="flex items-center gap-2.5">
          <svg viewBox="0 0 20 20" className="size-5" fill="none" stroke="#1b1b1b" strokeWidth="1.300" strokeLinecap="round">
            <path d="M.8 8a13 13 0 0 1 18.400 0M3.500 10.700a9.200 9.200 0 0 1 13 0M6.300 13.300a5.300 5.300 0 0 1 7.400 0" />
            <circle cx="10" cy="15.800" r="1" fill="#1b1b1b" />
          </svg>
          <svg viewBox="0 0 20 20" className="size-5" fill="none" stroke="#1b1b1b" strokeWidth="1.200" strokeLinecap="round" strokeLinejoin="round">
            <path d="M.8 7.500h3.400L8.500 3.500v13l-4.300-4H.8zM11 7.500c1 1.400 1 3.600 0 5M13.500 5.500c2.200 2.500 2.200 6.500 0 9" />
            <path d="M16.200 3.500c3.400 4 3.400 9 0 13" stroke="#b5b5b5" />
          </svg>
          <svg viewBox="0 0 20 20" className="size-5" fill="none" stroke="#1b1b1b" strokeWidth="1.200">
            <path d="M10.500 4.800H16a2 2 0 0 1 2 2v6.400a2 2 0 0 1-2 2H6.500" />
            <path d="M18.500 8h1v4h-1z" fill="#1b1b1b" strokeWidth=".8" />
            <path d="M8.200 3.200c.9 4.400.8 8.300-2.700 9.800-1.600.7-3 .5-3.900-.4C-.2 10.500.8 7 4.500 5.600c1.600-.6 2.800-1.200 3.700-2.400z" fill="#1b1b1b" stroke="none" />
            <path d="M.6 16.500c.3-1.600 1-3.200 2.200-4.500" />
            <path d="M10 11.500h2v3H7.500c1.200-.7 2-1.700 2.500-3z" fill="#1b1b1b" stroke="none" />
          </svg>
        </button>
        <time className="ml-5 text-right text-sm leading-5">11:44<br />03/06/2022</time>
      </div>
    </footer>
  );
}

export default function App() {
  return (
    <div className="relative flex h-screen flex-col overflow-hidden font-['Noto_Sans','Open_Sans',sans-serif]">
      <Browser />
      <div className="pointer-events-none absolute top-px bottom-[79px] left-[59px] w-2/3 rounded-[10px] shadow-[0_10px_36px_rgba(0,0,0,0.6)]" />
      <SettingsWindow />
      <Taskbar />
    </div>
  );
}
